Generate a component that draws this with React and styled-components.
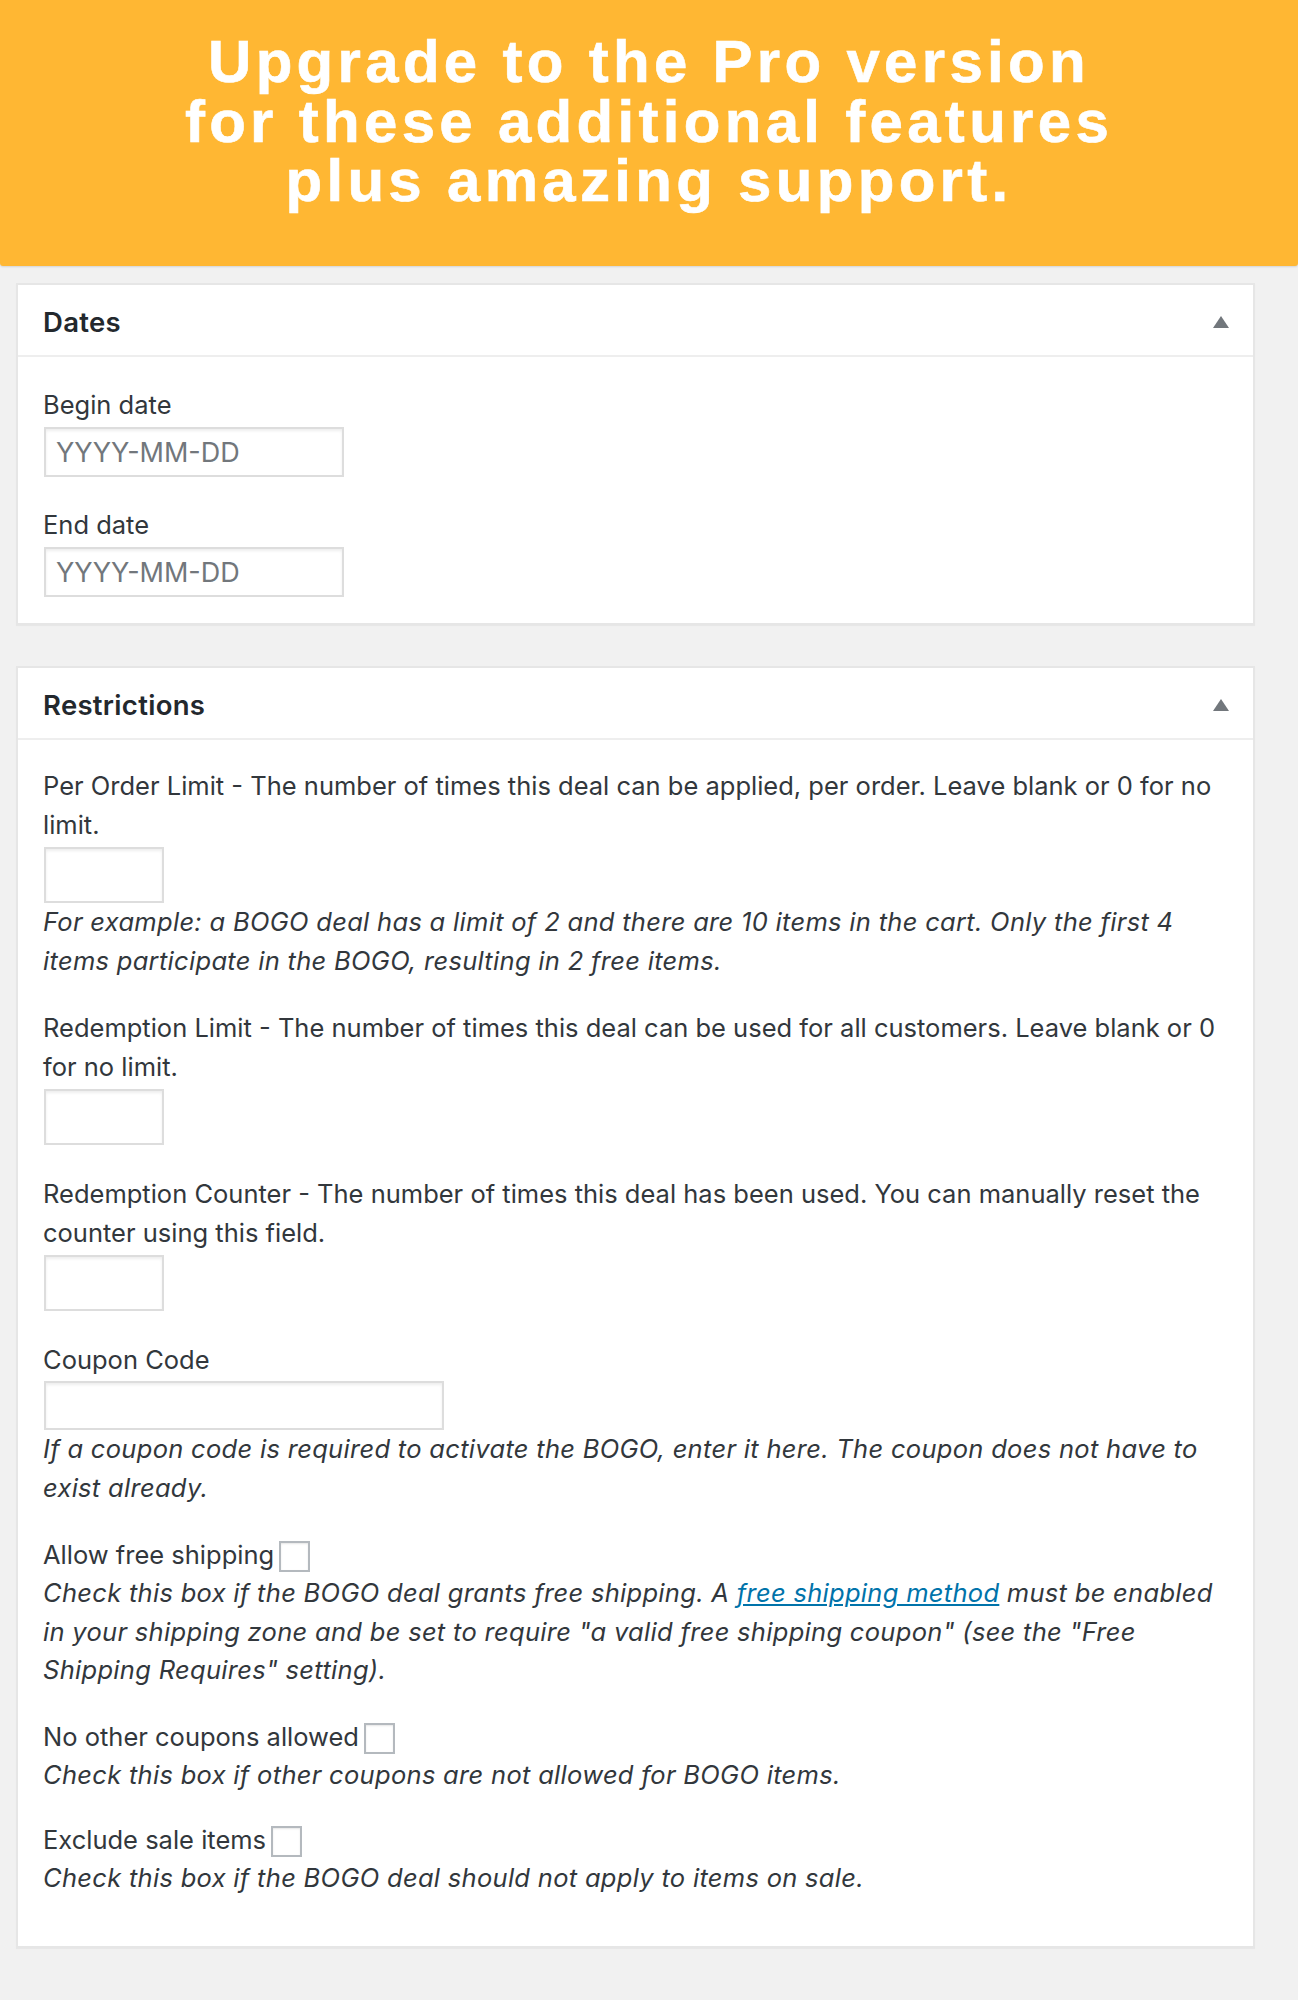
import React from "react";
import styled, { createGlobalStyle } from "styled-components";

const GlobalStyle = createGlobalStyle`
  html, body {
    margin: 0;
    padding: 0;
    background: #f1f1f1;
  }
  body {
    font-family: Inter, "Noto Sans", sans-serif;
    color: #444;
  }
  * { box-sizing: border-box; }
`;

const Page = styled.div`
  width: 1298px;
  padding-bottom: 52px;
`;

const Banner = styled.header`
  background: #ffb733;
  height: 266px;
  padding-top: 32px;
  border-radius: 0 0 3px 3px;
  box-shadow: 0 1px 2px rgba(0, 0, 0, 0.12);
  text-align: center;
`;

const BannerLine = styled.div`
  font-family: "Liberation Sans", Arial, sans-serif;
  font-weight: 700;
  font-size: 60px;
  line-height: 59.5px;
  letter-spacing: 4.3px;
  color: #fff;
  -webkit-text-stroke: 0.6px #fff;
`;

const Panel = styled.section`
  margin: ${(p) => p.$top}px 43px 0 16px;
  background: #fff;
  border: 2px solid #e6e6e6;
  box-shadow: 0 1px 1px rgba(0, 0, 0, 0.04);
`;

const PanelHeader = styled.div`
  display: flex;
  align-items: center;
  justify-content: space-between;
  height: 72px;
  padding: 3px 24px 0 25px;
  border-bottom: 2px solid #eee;
`;

const PanelTitle = styled.h2`
  margin: 0;
  font-family: Inter, "Noto Sans", sans-serif;
  font-size: 27.5px;
  letter-spacing: 0.3px;
  font-weight: 600;
  color: #23282d;
`;

const Toggle = styled.span`
  width: 0;
  height: 0;
  border-left: 8px solid transparent;
  border-right: 8px solid transparent;
  border-bottom: 12px solid #72777c;
`;

const PanelBody = styled.div`
  padding: ${(p) => p.$top}px 25px ${(p) => p.$bottom}px 25px;
`;

const Field = styled.div`
  margin-top: ${(p) => p.$gap ?? 0}px;
`;

const Label = styled.div`
  font-size: 25.5px;
  line-height: 39px;
  color: #32373c;
`;

const Description = styled.div`
  font-size: 25.5px;
  line-height: 38.5px;
  letter-spacing: 0.3px;
  font-style: italic;
  color: #32373c;
`;

const TextInput = styled.input`
  display: block;
  width: ${(p) => p.$w}px;
  height: ${(p) => p.$h}px;
  margin: ${(p) => p.$mt ?? 3}px 0 0 1px;
  padding: 0 10px;
  border: 2px solid #ddd;
  box-shadow: inset 0 2px 3px rgba(0, 0, 0, 0.07);
  background: #fff;
  font-family: Inter, "Noto Sans", sans-serif;
  font-size: 27px;
  color: #32373c;
  outline: none;
  &::placeholder {
    color: #72777c;
  }
`;

const Checkbox = styled.span`
  display: inline-block;
  width: 31px;
  height: 31px;
  margin-left: 5px;
  vertical-align: -8px;
  border: 2px solid #b4b9be;
  background: #fff;
  box-shadow: inset 0 1px 2px rgba(0, 0, 0, 0.1);
`;

const Link = styled.a`
  color: #0073aa;
  text-decoration: underline;
`;

export default function App() {
  return (
    <Page>
      <GlobalStyle />
      <Banner>
        <BannerLine>Upgrade to the Pro version</BannerLine>
        <BannerLine>for these additional features</BannerLine>
        <BannerLine>plus amazing support.</BannerLine>
      </Banner>

      <Panel $top={17}>
        <PanelHeader>
          <PanelTitle>Dates</PanelTitle>
          <Toggle />
        </PanelHeader>
        <PanelBody $top={28} $bottom={26}>
          <Field>
            <Label>Begin date</Label>
            <TextInput $w={300} $h={50} placeholder="YYYY-MM-DD" />
          </Field>
          <Field $gap={28}>
            <Label>End date</Label>
            <TextInput $w={300} $h={50} placeholder="YYYY-MM-DD" />
          </Field>
        </PanelBody>
      </Panel>

      <Panel $top={41}>
        <PanelHeader>
          <PanelTitle>Restrictions</PanelTitle>
          <Toggle />
        </PanelHeader>
        <PanelBody $top={26} $bottom={48}>
          <Field>
            <Label>
              Per Order Limit - The number of times this deal can be applied, per order. Leave blank or 0 for no limit.
            </Label>
            <TextInput $w={120} $h={56} />
            <Description>
              For example: a BOGO deal has a limit of 2 and there are 10 items in the cart. Only the first 4 items
              participate in the BOGO, resulting in 2 free items.
            </Description>
          </Field>
          <Field $gap={28}>
            <Label>
              Redemption Limit - The number of times this deal can be used for all customers. Leave blank or 0 for no
              limit.
            </Label>
            <TextInput $w={120} $h={56} />
          </Field>
          <Field $gap={29}>
            <Label>
              Redemption Counter - The number of times this deal has been used. You can manually reset the counter
              using this field.
            </Label>
            <TextInput $w={120} $h={56} />
          </Field>
          <Field $gap={29}>
            <Label>Coupon Code</Label>
            <TextInput $w={400} $h={49} $mt={2} />
            <Description>
              If a coupon code is required to activate the BOGO, enter it here. The coupon does not have to exist
              already.
            </Description>
          </Field>
          <Field $gap={28}>
            <Label>
              Allow free shipping
              <Checkbox />
            </Label>
            <Description>
              Check this box if the BOGO deal grants free shipping. A <Link href="#">free shipping method</Link> must be
              enabled in your shipping zone and be set to require "a valid free shipping coupon" (see the "Free
              Shipping Requires" setting).
            </Description>
          </Field>
          <Field $gap={27}>
            <Label>
              No other coupons allowed
              <Checkbox />
            </Label>
            <Description>Check this box if other coupons are not allowed for BOGO items.</Description>
          </Field>
          <Field $gap={26}>
            <Label>
              Exclude sale items
              <Checkbox />
            </Label>
            <Description>Check this box if the BOGO deal should not apply to items on sale.</Description>
          </Field>
        </PanelBody>
      </Panel>
    </Page>
  );
}
